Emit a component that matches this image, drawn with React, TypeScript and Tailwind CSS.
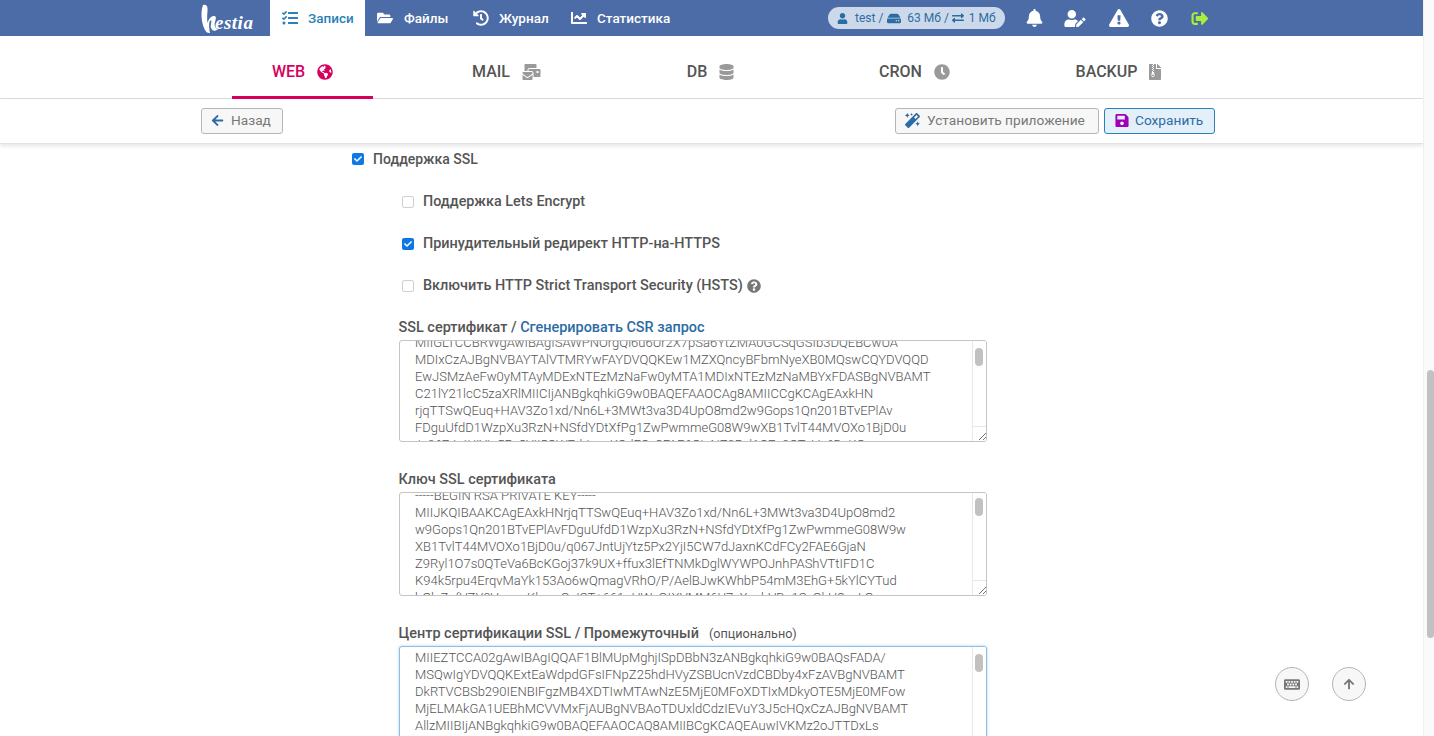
import React from "react";
import {
  FaTasks, FaFolderOpen, FaHistory, FaChartLine, FaUser, FaHdd, FaExchangeAlt, FaBell, FaUserEdit,
  FaExclamationTriangle, FaQuestionCircle, FaSignOutAlt, FaGlobeAmericas, FaMailBulk, FaDatabase, FaClock,
  FaFileArchive, FaArrowLeft, FaMagic, FaSave, FaKeyboard, FaArrowUp, FaCheck,
} from "react-icons/fa";

const navItems = [
  { label: "Записи", Icon: FaTasks, active: true, w: "w-[95px]", gap: "ml-[10px]" },
  { label: "Файлы", Icon: FaFolderOpen, active: false, w: "w-[96px]", gap: "ml-[11px]" },
  { label: "Журнал", Icon: FaHistory, active: false, w: "w-[98px]", gap: "ml-[10px]" },
  { label: "Статистика", Icon: FaChartLine, active: false, w: "w-[120px]", gap: "ml-[10px]" },
];

const tabs = [
  { label: "WEB", Icon: FaGlobeAmericas, active: true, icon: "h-4 w-4" },
  { label: "MAIL", Icon: FaMailBulk, active: false, icon: "h-4 w-[19px]" },
  { label: "DB", Icon: FaDatabase, active: false, icon: "h-4 w-[15px]" },
  { label: "CRON", Icon: FaClock, active: false, icon: "h-4 w-4" },
  { label: "BACKUP", Icon: FaFileArchive, active: false, icon: "h-4 w-[12px]" },
];

const cert = [
  "MIIGLTCCBRWgAwIBAgISAWPNOrgQl6u6Ur2X7pSa6YtZMA0GCSqGSIb3DQEBCwUA",
  "MDIxCzAJBgNVBAYTAlVTMRYwFAYDVQQKEw1MZXQncyBFbmNyeXB0MQswCQYDVQQD",
  "EwJSMzAeFw0yMTAyMDExNTEzMzNaFw0yMTA1MDIxNTEzMzNaMBYxFDASBgNVBAMT",
  "C21lY21lcC5zaXRlMIICIjANBgkqhkiG9w0BAQEFAAOCAg8AMIICCgKCAgEAxkHN",
  "rjqTTSwQEuq+HAV3Zo1xd/Nn6L+3MWt3va3D4UpO8md2w9Gops1Qn201BTvEPlAv",
  "FDguUfdD1WzpXu3RzN+NSfdYDtXfPg1ZwPwmmeG08W9wXB1TvlT44MVOXo1BjD0u",
  "/q067JntUjYtz5Px2YjI5CW7dJaxnKCdFCy2FAE6GjaNZ9Ryl1O7s0QTeVa6BcKG",
];
const key = [
  "-----BEGIN RSA PRIVATE KEY-----",
  "MIIJKQIBAAKCAgEAxkHNrjqTTSwQEuq+HAV3Zo1xd/Nn6L+3MWt3va3D4UpO8md2",
  "w9Gops1Qn201BTvEPlAvFDguUfdD1WzpXu3RzN+NSfdYDtXfPg1ZwPwmmeG08W9w",
  "XB1TvlT44MVOXo1BjD0u/q067JntUjYtz5Px2YjI5CW7dJaxnKCdFCy2FAE6GjaN",
  "Z9Ryl1O7s0QTeVa6BcKGoj37k9UX+ffux3lEfTNMkDglWYWPOJnhPAShVTtIFD1C",
  "K94k5rpu4ErqvMaYk153Ao6wQmagVRhO/P/AelBJwKWhbP54mM3EhG+5kYlCYTud",
  "bGlxZgfVZY0VwmnKlwxcOsIST+661uHWxQtXVMM6U7yXeubVBq1SvOkH3xoLGm",
];
const ca = [
  "MIIEZTCCA02gAwIBAgIQQAF1BlMUpMghjISpDBbN3zANBgkqhkiG9w0BAQsFADA/",
  "MSQwIgYDVQQKExtEaWdpdGFsIFNpZ25hdHVyZSBUcnVzdCBDby4xFzAVBgNVBAMT",
  "DkRTVCBSb290IENBIFgzMB4XDTIwMTAwNzE5MjE0MFoXDTIxMDkyOTE5MjE0MFow",
  "MjELMAkGA1UEBhMCVVMxFjAUBgNVBAoTDUxldCdzIEVuY3J5cHQxCzAJBgNVBAMT",
  "AllzMIIBIjANBgkqhkiG9w0BAQEFAAOCAQ8AMIIBCgKCAQEAuwIVKMz2oJTTDxLs",
];

function Check({ checked }: { checked: boolean }) {
  return checked ? (
    <span className="flex h-3 w-3 items-center justify-center rounded-[2px] bg-[#0f78e6] text-white">
      <FaCheck className="h-2 w-2" />
    </span>
  ) : (
    <span className="h-3 w-3 rounded-[2px] border border-[#d0d0d0] bg-white" />
  );
}

function Row({ checked, label, extra, className, size }: { checked: boolean; label: string; extra?: boolean; className: string; size: string }) {
  return (
    <div className={`flex h-5 items-center ${className}`}>
      <Check checked={checked} />
      <span className={`ml-[9px] whitespace-nowrap font-medium text-[#555] ${size}`}>{label}</span>
      {extra && <FaQuestionCircle className="ml-[4px] h-[14px] w-[14px] text-[#777]" />}
    </div>
  );
}

function CodeBox({ lines, offset, height, focus, thumbTop, handle }: { lines: string[]; offset: string; height: string; focus?: boolean; thumbTop: string; handle: boolean }) {
  return (
    <div className={`relative w-[588px] overflow-hidden rounded-[3px] border bg-white ${height} ${focus ? "border-[#8ebfe0] shadow-[0_0_3px_rgba(80,160,220,0.5)]" : "border-[#c4c4c4]"}`}>
      <div className={`pl-[15px] text-[13.02px] font-light leading-[17px] whitespace-nowrap text-[#555] ${offset}`}>
        {lines.map((l) => (
          <div key={l}>{l}</div>
        ))}
      </div>
      <div className="absolute bottom-0 right-0 top-0 w-[14px] border-l border-[#e8e8e8] bg-white">
        <div className={`absolute left-[2px] h-[18px] w-[8px] rounded-full bg-[#c1c1c1] ${thumbTop}`} />
        {handle && (
          <div className="absolute bottom-0 left-0 flex h-[15px] w-[14px] items-end justify-end border-t border-[#e8e8e8]">
            <svg width="10" height="10" viewBox="0 0 10 10" stroke="#777" strokeWidth="1">
              <path d="M9 2 L2 9 M9 6 L6 9" />
            </svg>
          </div>
        )}
      </div>
    </div>
  );
}

function Logo() {
  return (
    <div className="flex h-9 w-[70px] items-center">
      <svg width="20" height="32" viewBox="0 0 20 32" className="ml-px mt-[1px] shrink-0">
        <path d="M2 2 C5.500 1 7 3 6.500 8 C6 13 6 17 6.500 20 C8 15 11 12.500 13.500 13 C15.500 13.500 15 16 14 19 C13 22.500 14 25.500 17 26 C14 29 10.500 28 9.800 24 C9.500 21 11.500 17 9.500 17.500 C7.500 18.500 8 25 9 30 C5 31 2.500 25 1 18 C0 12 0.500 6 2 2 Z" fill="#fff" />
      </svg>
      <span className="-ml-[6px] mt-[9px] text-[19px] font-bold italic leading-none tracking-[0.5px] text-white" style={{ fontFamily: '"Liberation Serif", serif' }}>
        estia
      </span>
    </div>
  );
}

export default function App() {
  return (
    <div className="flex h-[736px] w-[1434px] overflow-hidden bg-white" style={{ fontFamily: 'Roboto, "Noto Sans", sans-serif' }}>
      <div className="flex min-w-0 flex-1 flex-col">
        <header className="flex h-9 shrink-0 items-center bg-[#4c6ca7] pl-[200px]">
          <Logo />
          {navItems.map(({ label, Icon, active, w, gap }) => (
            <div key={label} className={`flex h-9 items-center pl-[12px] text-[13.5px] font-medium ${w} ${active ? "bg-white text-[#2c80b8]" : "text-white"}`}>
              <Icon className="h-4 w-4 shrink-0" />
              <span className={`${gap} whitespace-nowrap`}>{label}</span>
            </div>
          ))}
          <div className="ml-[149px] flex h-[22px] w-[177px] items-center rounded-full bg-[#ccd9ea] pl-[9px] text-[12px] text-[#2c6ca5]">
            <FaUser className="h-[11px] w-[11px]" />
            <span className="ml-[7px]">test /</span>
            <FaHdd className="ml-1 h-[13px] w-[14px]" />
            <span className="ml-[6px]">63 Мб /</span>
            <FaExchangeAlt className="ml-[3px] h-3 w-3" />
            <span className="ml-[5px]">1 Мб</span>
          </div>
          <FaBell className="ml-[21px] h-[18px] w-[17px] text-white" />
          <FaUserEdit className="ml-[21px] h-[17px] w-[22px] text-white" />
          <FaExclamationTriangle className="ml-[23px] h-[18px] w-5 text-white" />
          <FaQuestionCircle className="ml-[22px] h-[17px] w-[17px] text-white" />
          <FaSignOutAlt className="ml-[23px] h-[17px] w-[18px] text-[#a5f03c]" />
        </header>

        <nav className="flex h-[63px] shrink-0 items-stretch border-b border-[#dcdcdc] pl-[232px]">
          {tabs.map(({ label, Icon, active, icon }) => (
            <div key={label} className={`-mb-px mr-[63px] flex w-[141px] items-center justify-center border-b-[3px] pt-[11px] text-[16px] font-medium ${active ? "border-[#d7005d] text-[#d7005d]" : "border-transparent text-[#555]"}`}>
              <span>{label}</span>
              <Icon className={`ml-[12px] ${icon} ${active ? "text-[#d7005d]" : "text-[#9a9a9a]"}`} />
            </div>
          ))}
        </nav>

        <div className="flex h-[45px] shrink-0 items-center justify-between border-b border-[#e2e2e2] bg-white pl-[201px] pr-[208px] shadow-[0_2px_4px_rgba(0,0,0,0.1)]">
          <button className="flex h-[26px] w-[82px] items-center rounded-[3px] border border-[#b5b5b5] bg-[#f7f7f7] pb-[1px] pl-[9px] text-[13.7px] text-[#777]">
            <FaArrowLeft className="h-[13px] w-[13px] text-[#2c6ca5]" />
            <span className="ml-[7px]">Назад</span>
          </button>
          <div className="flex gap-[5px]">
            <button className="flex h-[26px] w-[204px] items-center rounded-[3px] border border-[#b5b5b5] bg-[#f7f7f7] pb-[1px] pl-[9px] text-[13.7px] text-[#777]">
              <FaMagic className="h-[15px] w-[15px] text-[#2c6ca5]" />
              <span className="ml-[7px] whitespace-nowrap">Установить приложение</span>
            </button>
            <button className="flex h-[26px] w-[111px] items-center rounded-[3px] border border-[#2c80b8] bg-[#e3f0f9] pb-[1px] pl-[10px] text-[13.7px] text-[#2c6ca5]">
              <FaSave className="h-[15px] w-[14px] text-[#a100b8]" />
              <span className="ml-[6px]">Сохранить</span>
            </button>
          </div>
        </div>

        <main className="flex min-h-0 flex-1 flex-col overflow-hidden pl-[352px] pt-[5px]">
          <Row checked label="Поддержка SSL" className="" size="text-[14px]" />
          <Row checked={false} label="Поддержка Lets Encrypt" className="ml-[50px] mt-[23px]" size="text-[14.35px]" />
          <Row checked label="Принудительный редирект HTTP-на-HTTPS" className="ml-[50px] mt-[22px]" size="text-[14.45px]" />
          <Row checked={false} label="Включить HTTP Strict Transport Security (HSTS)" extra className="ml-[50px] mt-[22px]" size="text-[14.45px]" />

          <div className="ml-[46.500px] mt-[22px] h-[20px] text-[14.45px] font-medium leading-[20px] text-[#555]">
            SSL сертификат / <span className="text-[#2c6ca5]">Сгенерировать CSR запрос</span>
          </div>
          <div className="ml-[47px] mt-[2px]">
            <CodeBox lines={cert} offset="-mt-[7px]" height="h-[102px]" thumbTop="top-[7px]" handle />
          </div>

          <div className="ml-[46.500px] mt-[28px] h-[20px] text-[14.45px] font-medium leading-[20px] text-[#555]">Ключ SSL сертификата</div>
          <div className="ml-[47px] mt-[2px]">
            <CodeBox lines={key} offset="-mt-[6px]" height="h-[104px]" thumbTop="top-[5px]" handle />
          </div>

          <div className="ml-[46.500px] mt-[28px] flex h-[20px] items-center text-[14.45px] font-medium text-[#555]">
            Центр сертификации SSL / Промежуточный
            <span className="ml-[10px] text-[12.6px] font-normal text-[#555]">(опционально)</span>
          </div>
          <div className="ml-[47px] mt-[2px]">
            <CodeBox lines={ca} offset="mt-[2px]" height="h-[120px]" focus thumbTop="top-[7px]" handle={false} />
          </div>
        </main>
      </div>

      <div className="relative w-[11px] shrink-0 border-l border-[#efefef] bg-[#fafafa]">
        <div className="absolute right-0 top-[370px] h-[268px] w-[7px] rounded-full bg-[#c1c1c1]" />
      </div>

      <button className="absolute left-[1275px] top-[667px] flex h-[34px] w-[34px] items-center justify-center rounded-full border border-[#b5b5b5] bg-[#f7f7f7] text-[#777]">
        <FaKeyboard className="h-[15px] w-4" />
      </button>
      <button className="absolute left-[1332px] top-[667px] flex h-[34px] w-[34px] items-center justify-center rounded-full border border-[#b5b5b5] bg-[#f7f7f7] text-[#777]">
        <FaArrowUp className="h-3 w-3" />
      </button>
    </div>
  );
}
